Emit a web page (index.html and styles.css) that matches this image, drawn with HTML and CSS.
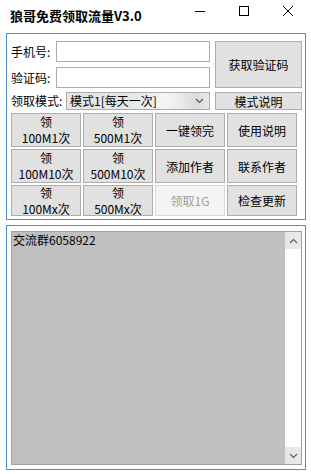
FILE: index.html
```html
<!DOCTYPE html>
<html>
<head>
<meta charset="utf-8">
<link rel="stylesheet" href="styles.css">
</head>
<body>
<div class="window">
  <div class="titlebar">
    <div class="title">狼哥免费领取流量V3.0</div>
    <div class="controls">
      <span class="ctl"><svg width="12" height="12" viewBox="0 0 12 12"><line x1="1" y1="6.5" x2="11" y2="6.5" stroke="#000" stroke-width="1"/></svg></span>
      <span class="ctl"><svg width="12" height="12" viewBox="0 0 12 12"><rect x="1.5" y="1.5" width="9" height="9" fill="none" stroke="#000" stroke-width="1"/></svg></span>
      <span class="ctl"><svg width="12" height="12" viewBox="0 0 12 12"><path d="M1 1L11 11M11 1L1 11" stroke="#000" stroke-width="1"/></svg></span>
    </div>
  </div>
  <div class="group g1">
    <div class="top">
      <div class="left">
        <div class="row"><span class="lbl">手机号:</span><div class="input"></div></div>
        <div class="row"><span class="lbl">验证码:</span><div class="input"></div></div>
        <div class="row r3"><span class="lbl lbl2">领取模式:</span>
          <div class="select"><span class="seltext">模式1[每天一次]</span>
            <svg class="chev" width="9" height="6" viewBox="0 0 9 6"><path d="M1 1L4.5 4.5L8 1" fill="none" stroke="#555" stroke-width="1.2"/></svg>
          </div>
        </div>
      </div>
      <div class="right">
        <div class="btn code">获取验证码</div>
        <div class="btn mode">模式说明</div>
      </div>
    </div>
    <div class="grid">
      <div class="btn two">领<br>100M1次</div>
      <div class="btn two">领<br>500M1次</div>
      <div class="btn">一键领完</div>
      <div class="btn">使用说明</div>
      <div class="btn two">领<br>100M10次</div>
      <div class="btn two">领<br>500M10次</div>
      <div class="btn">添加作者</div>
      <div class="btn">联系作者</div>
      <div class="btn two">领<br>100Mx次</div>
      <div class="btn two">领<br>500Mx次</div>
      <div class="btn disabled">领取1G</div>
      <div class="btn">检查更新</div>
    </div>
  </div>
  <div class="group g2">
    <div class="textarea">
      <div class="text">交流群6058922</div>
      <div class="scroll">
        <div class="arrow up"><svg width="9" height="6" viewBox="0 0 9 6"><path d="M1 5L4.5 1.5L8 5" fill="none" stroke="#606060" stroke-width="1.2"/></svg></div>
        <div class="track"></div>
        <div class="arrow down"><svg width="9" height="6" viewBox="0 0 9 6"><path d="M1 1L4.5 4.5L8 1" fill="none" stroke="#606060" stroke-width="1.2"/></svg></div>
      </div>
    </div>
  </div>
</div>
</body>
</html>
```
FILE: styles.css
```css
html, body {
  margin: 0;
  padding: 0;
  background: #fff;
}
body {
  width: 311px;
  height: 474px;
  overflow: hidden;
  font-family: "Noto Sans CJK SC", "Noto Sans", sans-serif;
  font-size: 12px;
  color: #000;
}
.window {
  display: flex;
  flex-direction: column;
  height: 474px;
}
.titlebar {
  height: 33px;
  display: flex;
  align-items: center;
  justify-content: space-between;
  flex: none;
}
.title {
  font-weight: bold;
  font-size: 13px;
  margin-left: 10px;
  margin-top: -2px;
}
.controls {
  display: flex;
  align-self: flex-start;
  margin-top: 5px;
  margin-right: 17px;
}
.ctl {
  width: 12px;
  height: 12px;
  display: block;
  margin-left: 32px;
}
.ctl svg { display: block; }
.group {
  border: 1px solid #4a90d9;
  margin: 0 5px 0 6px;
  box-sizing: border-box;
}
.g1 {
  padding: 7px 3px 3px 4px;
}
.top {
  display: flex;
  gap: 5px;
}
.left {
  width: 199px;
  display: flex;
  flex-direction: column;
  gap: 5px;
}
.row {
  display: flex;
  align-items: center;
  height: 21px;
}
.row.r3 {
  height: 18px;
  margin-top: -1px;
}
.lbl {
  width: 45px;
  font-size: 12px;
  line-height: 14px;
  white-space: nowrap;
}
.lbl2 { width: 55px; }
.input {
  width: 154px;
  height: 21px;
  box-sizing: border-box;
  border: 1px solid #abadb3;
  background: #fff;
}
.select {
  width: 144px;
  height: 18px;
  box-sizing: border-box;
  border: 1px solid #acacac;
  background: linear-gradient(to right, #e6e6e6 0%, #e6e6e6 45%, #f6f6f6 70%, #dcdcdc 90%, #e6e6e6 100%);
  display: flex;
  align-items: center;
  justify-content: space-between;
  padding: 0 5px 0 3px;
}
.seltext {
  font-size: 12px;
  line-height: 14px;
  white-space: nowrap;
}
.chev { display: block; }
.right {
  width: 87px;
  display: flex;
  flex-direction: column;
  gap: 4px;
}
.btn {
  box-sizing: border-box;
  border: 1px solid #adadad;
  background: #e1e1e1;
  display: flex;
  align-items: center;
  justify-content: center;
  text-align: center;
  font-size: 12px;
  line-height: 15px;
  white-space: nowrap;
}
.code { height: 47px; }
.mode { height: 18px; }
.grid {
  margin-top: 3px;
  display: grid;
  grid-template-columns: 70px 70px 70px 70px;
  grid-template-rows: 34px 34px 31px;
  gap: 2px;
}
.btn.two {
  line-height: 16px;
}
.btn.disabled {
  background: #f4f4f4;
  border-color: #d9d9d9;
  color: #a0a0a0;
}
.g2 {
  flex: 1;
  margin-top: 5px;
  margin-bottom: 4px;
  padding: 5px 3px 4px 4px;
  display: flex;
}
.textarea {
  flex: 1;
  border: 1px solid #a0a0a0;
  background: #c0c0c0;
  display: flex;
  justify-content: space-between;
}
.text {
  padding: 1px 0 0 1px;
  font-size: 12px;
  line-height: 14px;
}
.scroll {
  width: 16px;
  background: #fff;
  display: flex;
  flex-direction: column;
}
.arrow {
  height: 17px;
  background: #e8e8e8;
  display: flex;
  align-items: center;
  justify-content: center;
}
.track { flex: 1; background: #fff; }
```
